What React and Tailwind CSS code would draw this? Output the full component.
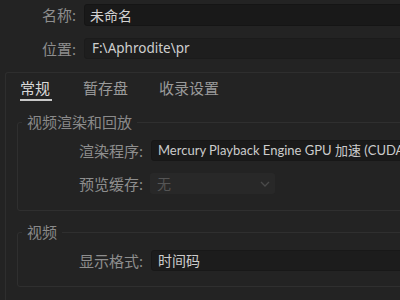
import React from "react";

const font = { fontFamily: '"Noto Sans", "Noto Sans CJK SC", sans-serif' };

function Row({ label, children, className = "" }) {
  return (
    <div className={"flex items-center gap-[8px] " + className}>
      <div className="w-[125px] shrink-0 text-right text-[15px] leading-[20px] text-[#8e8e8e]">{label}</div>
      {children}
    </div>
  );
}

export default function App() {
  return (
    <div
      className="w-[400px] h-[300px] overflow-hidden bg-[#232323] flex flex-col"
      style={font}
    >
      <div className="flex items-center pt-[4px]">
        <div className="w-[76px] shrink-0 text-right text-[15px] leading-[20px] text-[#8e8e8e]">名称:</div>
        <div className="ml-[8px] w-[340px] shrink-0 h-[22px] rounded-[3px] bg-[#191919] border border-[#151515] flex items-center pl-[5px] text-[14px] text-[#d2d2d2]">
          未命名
        </div>
      </div>
      <div className="flex items-center mt-[12px]">
        <div className="w-[76px] shrink-0 text-right text-[15px] leading-[20px] text-[#8e8e8e]">位置:</div>
        <div className="ml-[8px] w-[340px] shrink-0 h-[21px] rounded-[3px] bg-[#1e1e1e] border border-[#1b1b1b] flex items-center pl-[7px] text-[13.5px] text-[#cfcfcf]">
          F:\Aphrodite\pr
        </div>
      </div>

      <div className="mt-[13px] ml-[5px] w-[420px] shrink-0 flex-1 border-l border-t border-[#2e2e2e] rounded-tl-[3px] flex flex-col">
        <div className="flex gap-[31px] pl-[14px] pt-[5px] text-[15px] leading-[20px]">
          <div className="text-[#d9d9d9] border-b-2 border-[#c8c8c8] pb-[1px] pr-[2px]">常规</div>
          <div className="text-[#9a9a9a]">暂存盘</div>
          <div className="text-[#9a9a9a]">收录设置</div>
        </div>

        <fieldset className="mt-[11px] ml-[11px] border border-[#2f2f2f] rounded-[3px] pb-[16px]">
          <legend className="ml-[4px] px-[5px] text-[15px] leading-[20px] text-[#8a8a8a]">视频渲染和回放</legend>
          <Row label="渲染程序:" className="pt-[8px]">
            <div
              className="w-[260px] shrink-0 h-[21px] rounded-[3px] bg-[#1a1a1a] border border-[#171717] flex items-center pl-[6px] text-[13px] text-[#cccccc] whitespace-nowrap overflow-hidden font-['Lato','Noto_Sans_CJK_SC',sans-serif]"
            >
              Mercury Playback Engine GPU 加速 (CUDA)
            </div>
          </Row>
          <Row label="预览缓存:" className="mt-[12px]">
            <div className="w-[125px] shrink-0 h-[21px] rounded-[3px] bg-[#282828] flex items-center justify-between pl-[7px] pr-[5px] text-[14px] text-[#555555] -ml-[1px]">
              <span>无</span>
              <svg width="10" height="6" viewBox="0 0 10 6" fill="none">
                <path d="M1 1l4 4 4-4" stroke="#4a4a4a" strokeWidth="1.3" />
              </svg>
            </div>
          </Row>
        </fieldset>

        <fieldset className="mt-[11px] ml-[11px] border border-[#2f2f2f] rounded-[3px] pb-[15px]">
          <legend className="ml-[4px] px-[5px] text-[15px] leading-[20px] text-[#8a8a8a]">视频</legend>
          <Row label="显示格式:" className="pt-[8px]">
            <div className="w-[260px] shrink-0 h-[21px] rounded-[3px] bg-[#1c1c1c] border border-[#181818] flex items-center pl-[6px] text-[14px] text-[#cccccc]">
              时间码
            </div>
          </Row>
        </fieldset>
      </div>
    </div>
  );
}
